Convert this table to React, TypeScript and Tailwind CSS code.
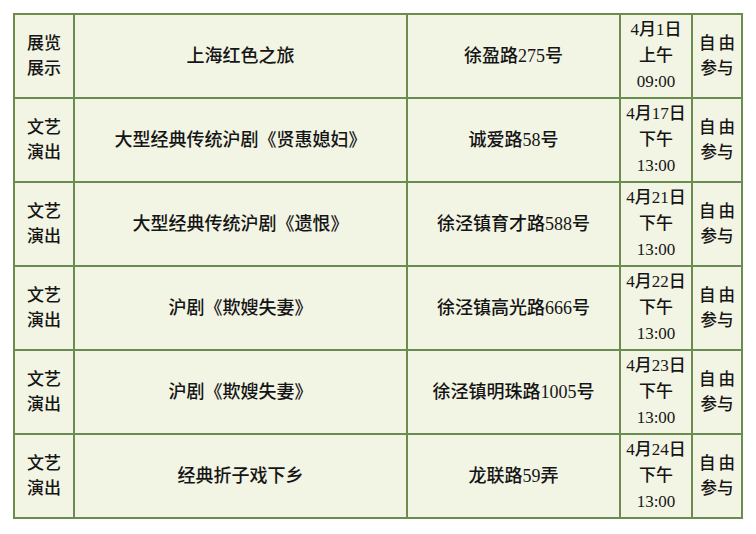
const rows = [
  { type: ["展览", "展示"], name: "上海红色之旅", place: "徐盈路275号", date: "4月1日", half: "上午", time: "09:00" },
  { type: ["文艺", "演出"], name: "大型经典传统沪剧《贤惠媳妇》", place: "诚爱路58号", date: "4月17日", half: "下午", time: "13:00" },
  { type: ["文艺", "演出"], name: "大型经典传统沪剧《遗恨》", place: "徐泾镇育才路588号", date: "4月21日", half: "下午", time: "13:00" },
  { type: ["文艺", "演出"], name: "沪剧《欺嫂失妻》", place: "徐泾镇高光路666号", date: "4月22日", half: "下午", time: "13:00" },
  { type: ["文艺", "演出"], name: "沪剧《欺嫂失妻》", place: "徐泾镇明珠路1005号", date: "4月23日", half: "下午", time: "13:00" },
  { type: ["文艺", "演出"], name: "经典折子戏下乡", place: "龙联路59弄", date: "4月24日", half: "下午", time: "13:00" },
];

const cell = "flex flex-col items-center justify-center bg-[#f2f4e4] text-center";

export default function App() {
  return (
    <div
      className="h-[534px] w-[756px] bg-white pl-[13px] pt-[13px] font-medium text-[#151515]"
      style={{ fontFamily: '"Liberation Serif", "Noto Sans CJK SC", serif' }}
    >
      <div className="grid w-fit grid-cols-[58px_331px_211px_70px_48px] auto-rows-[82px] gap-[2px] border-2 border-[#6b8c4e] bg-[#6b8c4e]">
        {rows.map((r, i) => (
          <div key={i} className="contents">
            <div className={`${cell} text-[17px] leading-[25px]`}>
              <span>{r.type[0]}</span>
              <span>{r.type[1]}</span>
            </div>
            <div className={`${cell} text-[18px]`}>{r.name}</div>
            <div className={`${cell} text-[18px]`}>{r.place}</div>
            <div className={`${cell} text-[17px] leading-[26px]`}>
              <span>{r.date}</span>
              <span>{r.half}</span>
              <span>{r.time}</span>
            </div>
            <div className={`${cell} text-[16.5px] leading-[25px]`}>
              <span className="tracking-[3px] pl-[3px]">自由</span>
              <span>参与</span>
            </div>
          </div>
        ))}
      </div>
    </div>
  );
}
